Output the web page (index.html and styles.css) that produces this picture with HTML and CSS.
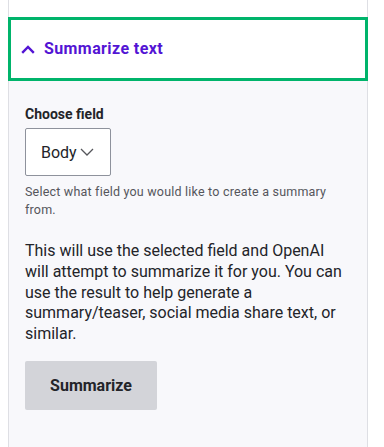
FILE: index.html
```html
<!DOCTYPE html>
<html lang="en">
<head>
<meta charset="utf-8">
<title>Summarize text</title>
<link rel="stylesheet" href="styles.css">
</head>
<body>
<div class="panel">
  <div class="panel-top"></div>
  <div class="summary">
    <svg class="summary-icon" width="14" height="9" viewBox="0 0 14 9" aria-hidden="true">
      <path d="M1.2 7.8 L7 2 L12.8 7.8" fill="none" stroke="currentColor" stroke-width="2.4"/>
    </svg>
    <span class="summary-title">Summarize text</span>
  </div>
  <div class="content">
    <div class="field">
      <label class="field-label">Choose field</label>
      <div class="select">
        <span>Body</span>
        <svg class="select-icon" width="14" height="8" viewBox="0 0 14 8" aria-hidden="true">
          <path d="M1 1 L7 7 L13 1" fill="none" stroke="currentColor" stroke-width="1.3"/>
        </svg>
      </div>
      <div class="field-desc">Select what field you would like to create a summary from.</div>
    </div>
    <p class="intro">This will use the selected field and OpenAI will attempt to summarize it for you. You can use the result to help generate a summary/teaser, social media share text, or similar.</p>
    <button class="btn" type="button">Summarize</button>
  </div>
</div>
</body>
</html>
```
FILE: styles.css
```css
html, body {
  margin: 0;
  padding: 0;
  background: #ffffff;
}
body {
  font-family: Roboto, "Open Sans", sans-serif;
  color: #232429;
}
.panel {
  margin-left: 8px;
  width: 360px;
  height: 447px;
  display: flex;
  flex-direction: column;
}
.panel-top {
  height: 17px;
  border-left: 1px solid #dedfe4;
  border-right: 1px solid #dedfe4;
  background: #ffffff;
}
.summary {
  height: 64px;
  box-sizing: border-box;
  border: 3px solid #00b46b;
  background: #ffffff;
  display: flex;
  align-items: center;
  padding-left: 10px;
  color: #5314d4;
}
.summary-icon {
  margin-right: 9px;
}
.summary-title {
  font-size: 16px;
  font-weight: 700;
  line-height: 20px;
  letter-spacing: 0.4px;
}
.content {
  flex: 1;
  border-left: 1px solid #dedfe4;
  border-right: 1px solid #dedfe4;
  background: #f8f8fb;
  padding: 24px 16px 16px 16px;
}
.field-label {
  display: block;
  font-size: 14px;
  font-weight: 700;
  line-height: 18px;
  margin-bottom: 5px;
}
.select {
  box-sizing: border-box;
  width: 86px;
  height: 48px;
  border: 1px solid #8e929c;
  border-radius: 2px;
  background: #ffffff;
  display: flex;
  align-items: center;
  padding-left: 15px;
  font-size: 16px;
  color: #232429;
}
.select-icon {
  margin-left: 3px;
  color: #55565b;
}
.field-desc {
  margin-top: 7px;
  font-size: 12.5px;
  letter-spacing: 0.2px;
  line-height: 18px;
  color: #55565b;
}
.intro {
  margin: 22px 0 16px;
  font-size: 16px;
  line-height: 20.8px;
}
.btn {
  font-family: inherit;
  font-size: 16px;
  font-weight: 700;
  color: #232429;
  background: #d3d4d9;
  border: 0;
  border-radius: 2px;
  width: 132px;
  height: 49px;
  padding: 0;
}
```
